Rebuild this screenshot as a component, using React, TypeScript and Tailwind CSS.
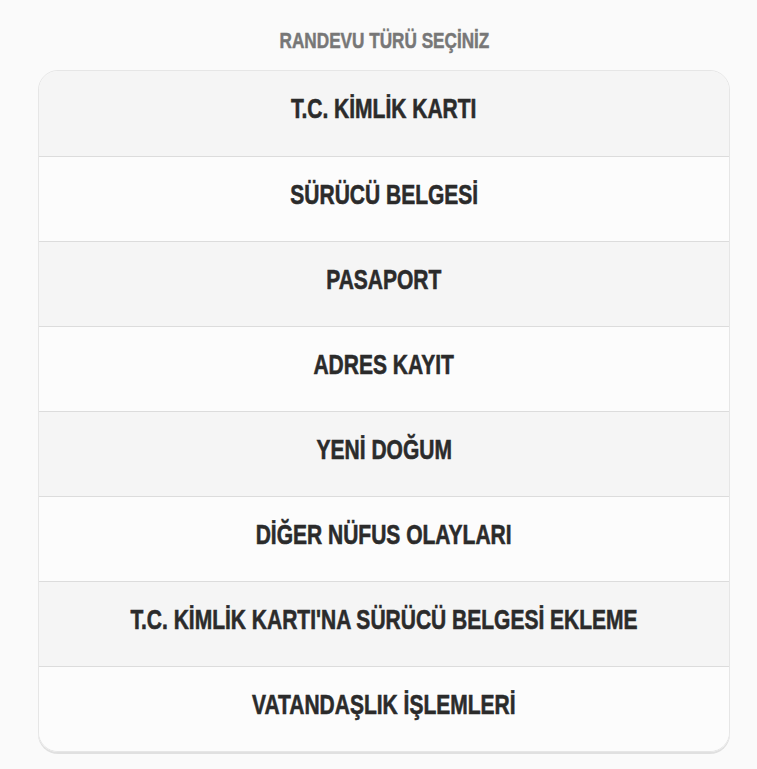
import React from "react";

const items = [
  "T.C. KİMLİK KARTI",
  "SÜRÜCÜ BELGESİ",
  "PASAPORT",
  "ADRES KAYIT",
  "YENİ DOĞUM",
  "DİĞER NÜFUS OLAYLARI",
  "T.C. KİMLİK KARTI'NA SÜRÜCÜ BELGESİ EKLEME",
  "VATANDAŞLIK İŞLEMLERİ",
];

export default function App() {
  return (
    <div className="min-h-[769px] w-full bg-[#fafafa] pt-[26px] [font-family:'Liberation_Sans',Arial,sans-serif]">
      <div className="ml-[38px] w-[692px]">
        <div className="text-center text-[22px] font-bold leading-[30px] text-[#777777]">
          <span className="inline-block scale-x-[0.78] [-webkit-text-stroke:0.5px_#777777]">RANDEVU TÜRÜ SEÇİNİZ</span>
        </div>
        <div className="mt-[14px] overflow-hidden rounded-[20px] border border-[#e6e6e6] shadow-[0_2px_0_#e0e0e0]">
          {items.map((t, i) => (
            <div
              key={t}
              className={`flex h-[85px] items-center justify-center pb-[9px] text-[28px] font-bold text-[#2b2b2b] ${
                i > 0 ? "border-t border-[#dcdcdc]" : ""
              } ${i % 2 === 0 ? "bg-[#f5f5f5]" : "bg-[#fcfcfc]"}`}
            >
              <span className="inline-block whitespace-nowrap scale-x-[0.75] [-webkit-text-stroke:0.6px_#2b2b2b]">{t}</span>
            </div>
          ))}
        </div>
      </div>
    </div>
  );
}
